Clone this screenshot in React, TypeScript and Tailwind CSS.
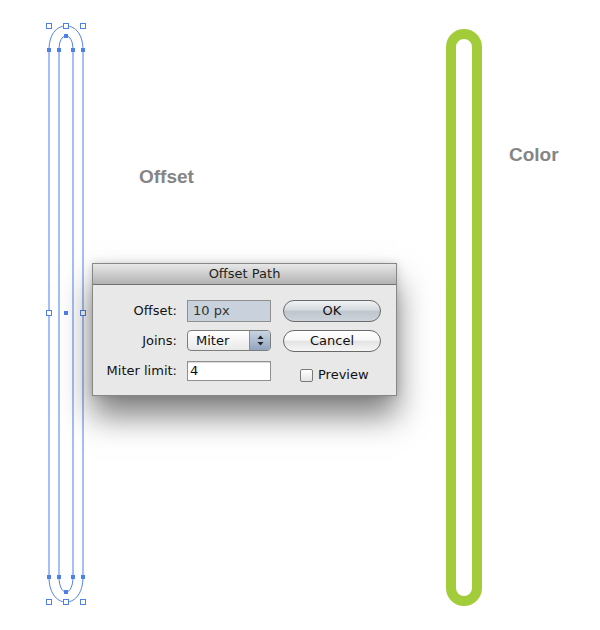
const blue = "#4f80e8";

const filled: [number, number][] = [
  [49, 50], [59, 50], [73, 50], [83, 50], [66, 36],
  [49, 577], [59, 577], [73, 577], [83, 577], [66, 592],
  [66, 313],
];
const hollow: [number, number][] = [
  [49, 26], [66, 26], [83, 26],
  [49, 313], [83, 313],
  [49, 602], [66, 602], [83, 602],
];

function SelectedPath() {
  return (
    <svg className="absolute left-0 top-0" width={600} height={630} viewBox="0 0 600 630">
      <g fill="none" stroke={blue} strokeWidth={1}>
        <path d="M49 577 L49 50 C49 35 56 26 66 26 C76 26 83 35 83 50 L83 577 C83 592 76 602 66 602 C56 602 49 592 49 577 Z" />
        <path d="M59 577 L59 50 C59 41 62 36 66 36 C70 36 73 41 73 50 L73 577 C73 586 70 592 66 592 C62 592 59 586 59 577 Z" />
      </g>
      {filled.map(([x, y], i) => (
        <rect key={`f${i}`} x={x - 2} y={y - 2} width={4} height={4} fill={blue} />
      ))}
      {hollow.map(([x, y], i) => (
        <rect key={`h${i}`} x={x - 2.5} y={y - 2.5} width={5} height={5} fill="#fff" stroke={blue} strokeWidth={1} />
      ))}
    </svg>
  );
}

function PillButton({ label, primary = false }: { label: string; primary?: boolean }) {
  return (
    <div
      className={`flex h-[22px] w-[98px] items-center justify-center rounded-full border border-[#6a6a6a] text-[13px] text-[#111] ${
        primary
          ? "bg-[linear-gradient(to_bottom,#f1f3f5_0%,#d5dae0_45%,#bfc6ce_52%,#cdd3da_100%)]"
          : "bg-[linear-gradient(to_bottom,#ffffff_0%,#f7f7f7_45%,#e4e4e4_52%,#f6f6f6_100%)]"
      }`}
    >
      {label}
    </div>
  );
}

function OffsetDialog() {
  return (
    <div
      className="absolute left-[92px] top-[263px] w-[305px] border border-[#878787] bg-[#e8e8e8] shadow-[0_20px_30px_rgba(0,0,0,0.5),0_0_8px_rgba(0,0,0,0.15)]"
      style={{ fontFamily: '"DejaVu Sans", sans-serif' }}
    >
      <div className="flex h-[21px] items-center justify-center border-b border-[#707070] bg-[linear-gradient(to_bottom,#e8e8e8,#b2b2b2)] text-[13px] text-[#1e1e1e]">
        Offset Path
      </div>
      <div className="grid grid-cols-[84px_84px_98px] grid-rows-[22px_22px_22px] gap-x-[10px] gap-y-[8px] pb-[13px] pt-[15px] text-[13px] text-[#111]">
        <div className="flex items-center justify-end">Offset:</div>
        <div className="flex items-center border border-[#8f8f8f] bg-[#c9d2dc] pl-[5px] text-[#333]">10 px</div>
        <div className="ml-[2px]"><PillButton label="OK" primary /></div>

        <div className="flex items-center justify-end">Joins:</div>
        <div className="flex h-[21px] overflow-hidden rounded-[4px] border border-[#7d7d7d] bg-[linear-gradient(to_bottom,#ffffff,#e9e9e9)]">
          <span className="flex flex-1 items-center pl-[8px]">Miter</span>
          <span className="flex w-[21px] items-center justify-center border-l border-[#8c8c8c] bg-[linear-gradient(to_bottom,#c9d4e2,#92a5bf)]">
            <svg width={7} height={11} viewBox="0 0 7 11">
              <path d="M3.5 0.5 L6.5 4 L0.5 4 Z" fill="#222" />
              <path d="M3.5 10.5 L6.5 7 L0.5 7 Z" fill="#222" />
            </svg>
          </span>
        </div>
        <div className="ml-[2px]"><PillButton label="Cancel" /></div>

        <div className="flex items-center justify-end">Miter limit:</div>
        <div className="flex h-[20px] items-center self-center border border-[#8f8f8f] bg-white pl-[2px] text-[#111] shadow-[inset_0_1px_1px_rgba(0,0,0,0.15)]">
          4
        </div>
        <div className="flex items-center gap-[5px] pl-[19px] pt-[8px]">
          <span className="h-[13px] w-[13px] rounded-[2px] border border-[#7a7a7a] bg-[linear-gradient(to_bottom,#ffffff,#e4e4e4)]" />
          <span>Preview</span>
        </div>
      </div>
    </div>
  );
}

export default function App() {
  return (
    <div className="relative h-[630px] w-[600px] overflow-hidden bg-white">
      <SelectedPath />
      <div
        className="absolute left-[139px] top-[167px] text-[19px] font-bold leading-none text-[#858585]"
        style={{ fontFamily: '"Liberation Sans", sans-serif' }}
      >
        Offset
      </div>
      <div
        className="absolute left-[509px] top-[145px] text-[19px] font-bold leading-none text-[#858585]"
        style={{ fontFamily: '"Liberation Sans", sans-serif' }}
      >
        Color
      </div>
      <div className="absolute left-[446px] top-[29px] h-[577px] w-[36px] rounded-full border-[10px] border-[#a2cc39]" />
      <OffsetDialog />
    </div>
  );
}
